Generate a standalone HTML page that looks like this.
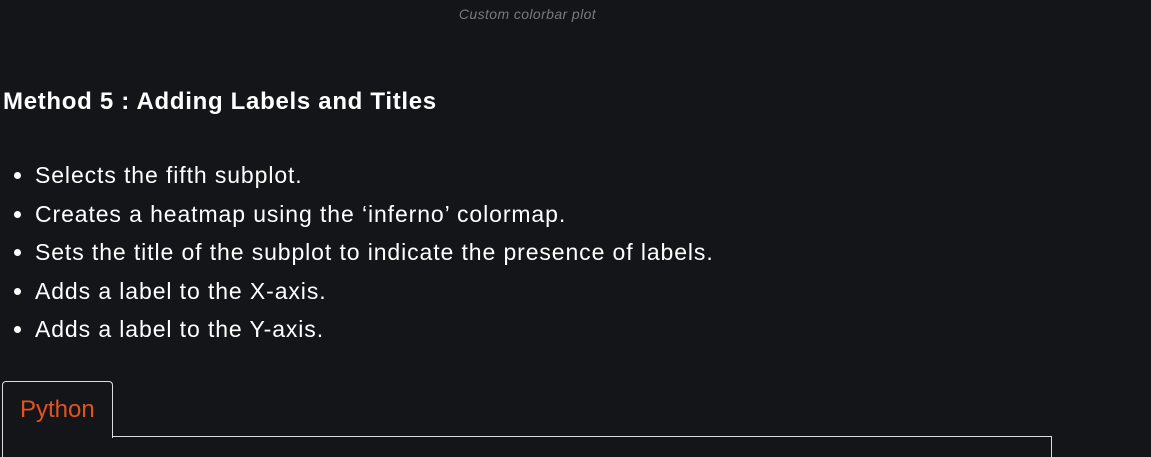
<!DOCTYPE html>
<html><head><style>
html,body{margin:0;padding:0;background:#141518;width:1151px;height:457px;overflow:hidden;font-family:"Liberation Sans",sans-serif;color:#fff;}
.cap{position:absolute;top:6px;left:0;width:1055px;text-align:center;font-size:14px;font-style:italic;color:#7a7a7a;letter-spacing:0.4px;}
h3{position:absolute;top:88px;left:3px;margin:0;font-size:24px;font-weight:bold;letter-spacing:0.7px;}
ul{position:absolute;top:156px;left:0;margin:0;padding-left:35px;font-size:23px;line-height:38.5px;letter-spacing:0.9px;}
.tab{position:absolute;left:2px;top:381px;width:109px;height:56px;border:1px solid #ddd;border-bottom:none;border-radius:4px 4px 0 0;background:#141518;z-index:2;}
.tab span{position:absolute;left:17px;top:14px;color:#e4531e;font-size:24px;}
.box{position:absolute;left:2px;top:436px;width:1048px;height:20px;border:1px solid #ddd;border-bottom:none;}
</style></head><body>
<div class="cap">Custom colorbar plot</div>
<h3>Method 5 : Adding Labels and Titles</h3>
<ul>
<li>Selects the fifth subplot.</li>
<li>Creates a heatmap using the ‘inferno’ colormap.</li>
<li>Sets the title of the subplot to indicate the presence of labels.</li>
<li>Adds a label to the X-axis.</li>
<li>Adds a label to the Y-axis.</li>
</ul>
<div class="box"></div>
<div class="tab"><span>Python</span></div>
</body></html>
